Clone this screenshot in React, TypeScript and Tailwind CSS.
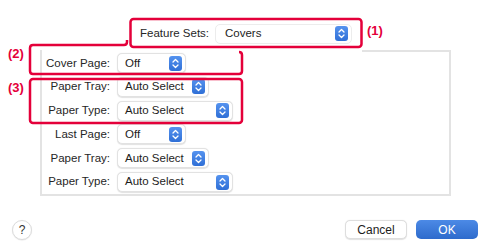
import React from "react";

const font = { fontFamily: '"Liberation Sans", Arial, sans-serif' };

const Stepper = () => (
  <span className="flex h-[15px] w-[13px] shrink-0 items-center justify-center rounded-[3px] bg-gradient-to-b from-[#5593ef] to-[#2f6fd6]">
    <svg width="7" height="11" viewBox="0 0 7 11" fill="none">
      <path d="M1 4 L3.5 1.5 L6 4" stroke="white" strokeWidth="1.3" strokeLinecap="round" strokeLinejoin="round" />
      <path d="M1 7 L3.5 9.5 L6 7" stroke="white" strokeWidth="1.3" strokeLinecap="round" strokeLinejoin="round" />
    </svg>
  </span>
);

const Popup = ({ value, width }: { value: string; width: string }) => (
  <div
    className={`ml-[7px] flex h-[20px] ${width} items-center justify-between rounded-[5px] border border-[#e2e2e2] bg-white pl-[7px] pr-[3px] text-[11.5px] text-[#1d1d1d] shadow-[0_0.5px_1px_rgba(0,0,0,0.12)]`}
  >
    <span className="whitespace-nowrap">{value}</span>
    <Stepper />
  </div>
);

const rows = [
  { label: "Cover Page:", value: "Off", width: "w-[69px]" },
  { label: "Paper Tray:", value: "Auto Select", width: "w-[92px]" },
  { label: "Paper Type:", value: "Auto Select", width: "w-[116px]" },
  { label: "Last Page:", value: "Off", width: "w-[69px]" },
  { label: "Paper Tray:", value: "Auto Select", width: "w-[92px]" },
  { label: "Paper Type:", value: "Auto Select", width: "w-[116px]" },
];

const App = () => {
  return (
    <div className="relative flex h-[250px] w-[487px] flex-col overflow-hidden bg-white" style={font}>
      {/* feature sets */}
      <div className="mt-[19px] flex h-[29px] items-center pl-[140px]">
        <span className="w-[68px] shrink-0 whitespace-nowrap text-[11.5px] text-[#262626]">Feature Sets:</span>
        <div className="ml-[7px] flex h-[20px] w-[137px] items-center justify-between rounded-[5px] border border-[#ececec] bg-white pl-[9px] pr-[3px] text-[11.5px] text-[#1d1d1d]">
          <span>Covers</span>
          <Stepper />
        </div>
      </div>

      {/* panel */}
      <div className="mt-[2px] ml-[40px] flex h-[146px] w-[411px] flex-col border-x-2 border-b-2 border-[#e3e3e3]">
        <div className="ml-[320px] h-[2px] bg-[#e3e3e3]" />
        {rows.map((row, i) => (
          <div key={i} className={`flex ${i === 0 ? "h-[23px]" : "h-[24px]"} items-center`}>
            <span className="w-[68px] shrink-0 whitespace-nowrap text-right text-[11.5px] text-[#262626]">{row.label}</span>
            <Popup value={row.value} width={row.width} />
          </div>
        ))}
      </div>

      {/* footer */}
      <div className="mt-[24px] flex h-[19px] items-center pr-[9px] pl-[12px]">
        <div className="flex h-[20px] w-[20px] items-center justify-center rounded-full border border-[#dcdcdc] bg-white text-[12px] text-[#333] shadow-[0_0.5px_1px_rgba(0,0,0,0.1)]">
          ?
        </div>
        <button className="ml-auto flex h-[19px] w-[62px] items-center justify-center rounded-[5px] border border-[#dedede] bg-white text-[12px] text-[#1d1d1d] shadow-[0_0.5px_1px_rgba(0,0,0,0.12)]">
          Cancel
        </button>
        <button className="ml-[9px] flex h-[19px] w-[62px] items-center justify-center rounded-[5px] bg-gradient-to-b from-[#4c8ae6] to-[#2e6bcc] text-[12px] text-white">
          OK
        </button>
      </div>

      {/* annotations */}
      <svg className="pointer-events-none absolute inset-0" width="487" height="250" fill="none">
        <rect x="130.5" y="19" width="231" height="28" rx="3" stroke="#e4003a" strokeWidth="2.5" />
        <path
          d="M127 40 V42 Q127 45 124 45 H33 Q30 45 30 48 V71 Q30 74 33 74 H239 Q242 74 242 71 V55 Q242 52 239 52"
          stroke="#e4003a"
          strokeWidth="2.5"
        />
        <rect x="30" y="79" width="212" height="44" rx="3" stroke="#e4003a" strokeWidth="2.5" />
      </svg>
      <span className="absolute top-[21px] left-[367px] text-[13px] font-bold text-[#e4003a]">(1)</span>
      <span className="absolute top-[44px] left-[8px] text-[13px] font-bold text-[#e4003a]">(2)</span>
      <span className="absolute top-[78px] left-[8px] text-[13px] font-bold text-[#e4003a]">(3)</span>
    </div>
  );
};

export default App;
